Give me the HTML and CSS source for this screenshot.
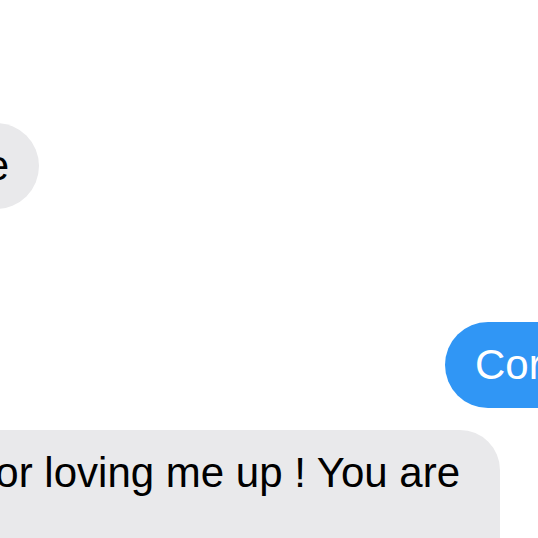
FILE: index.html
```html
<!DOCTYPE html>
<html lang="en">

<head>
    <meta charset="UTF-8" />
    <meta name="viewport" content="width=device-width, initial-scale=1.0" />
    <title>Messages</title>
    <link rel="stylesheet" href="styles.css">
</head>

<body>
    <div class="thread">
        <div class="row row-in row-short">
            <div class="bubble bubble-in">Love you babe</div>
        </div>

        <div class="row row-out">
            <div class="bubble bubble-out">Correct</div>
        </div>

        <div class="row row-in row-long">
            <div class="bubble bubble-in bubble-tall">Thank you for loving me up ! You are</div>
        </div>
    </div>
</body>

</html>
```

FILE: styles.css
```css
* {
    box-sizing: border-box;
}

body {
    margin: 0;
    height: 538px;
    overflow: hidden;
    background-color: #ffffff;
    font-family: "Liberation Sans", Arial, sans-serif;
}

.thread {
    display: flex;
    flex-direction: column;
    padding-top: 123px;
}

.row {
    display: flex;
}

/* incoming bubbles hang off the left edge */
.row-in {
    justify-content: flex-end;
}

.row-short {
    width: 39px;
}

.row-long {
    width: 500px;
    margin-top: 22px;
}

.row-out {
    padding-left: 445px;
    margin-top: 113px;
}

.bubble {
    flex-shrink: 0;
    white-space: nowrap;
    font-size: 42px;
    line-height: 52px;
    padding: 17px 30px;
    border-radius: 43px;
}

.bubble-in {
    background-color: #e9e9eb;
    color: #000000;
}

.bubble-out {
    background-color: #3096f5;
    color: #ffffff;
}

.bubble-tall {
    padding-right: 40px;
    padding-bottom: 90px;
    border-radius: 40px;
}
```
